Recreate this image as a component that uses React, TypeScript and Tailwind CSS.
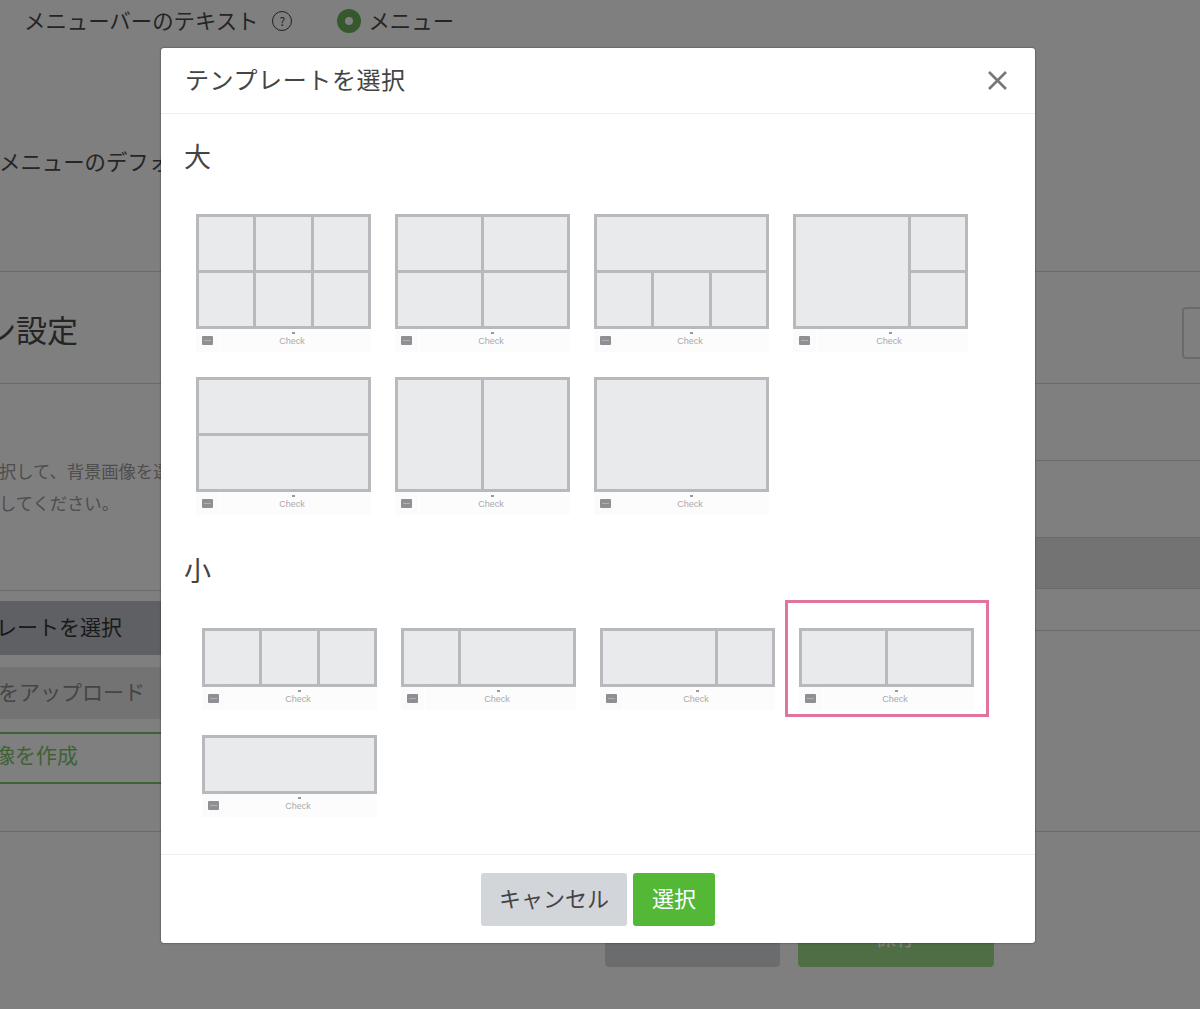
type Cell = string;

const jp = "font-['Noto_Sans_CJK_JP','Noto_Sans',sans-serif]";

// each template is a 6 column grid, cells say how they span
const large: Cell[][] = [
  ['col-span-2', 'col-span-2', 'col-span-2', 'col-span-2', 'col-span-2', 'col-span-2'],
  ['col-span-3', 'col-span-3', 'col-span-3', 'col-span-3'],
  ['col-span-6', 'col-span-2', 'col-span-2', 'col-span-2'],
  ['col-span-4 row-span-2', 'col-span-2', 'col-span-2'],
  ['col-span-6', 'col-span-6'],
  ['col-span-3 row-span-2', 'col-span-3 row-span-2'],
  ['col-span-6 row-span-2'],
];

const small: Cell[][] = [
  ['col-span-2 row-span-2', 'col-span-2 row-span-2', 'col-span-2 row-span-2'],
  ['col-span-2 row-span-2', 'col-span-4 row-span-2'],
  ['col-span-4 row-span-2', 'col-span-2 row-span-2'],
  ['col-span-3 row-span-2', 'col-span-3 row-span-2'],
  ['col-span-6 row-span-2'],
];

function Thumb({ cells, tall }: { cells: Cell[]; tall: boolean }) {
  return (
    <div className="w-[175px]">
      <div className={`grid grid-cols-6 grid-rows-2 gap-[3px] border-[3px] border-[#b8b9bd] bg-[#b8b9bd] ${tall ? 'h-[115px]' : 'h-[59px]'}`}>
        {cells.map((c, i) => (
          <div key={i} className={`bg-[#e9eaec] ${c}`} />
        ))}
      </div>
      <div className="flex h-[23px]">
        <div className="flex w-[23px] items-center justify-center bg-[#fbfbfb]">
          <div className="flex h-[9px] w-[11px] flex-col justify-center rounded-[1px] bg-[#8e8f93] px-[2px]">
            <div className="h-px bg-[#b0b1b5]" />
          </div>
        </div>
        <div className="relative ml-px flex-1 bg-[#fcfcfc] pr-[7px] text-center font-['Liberation_Sans',sans-serif] text-[9px] leading-[25px] text-[#a9a9ab]">
          Check
          <div className="absolute left-[72px] top-[3px] h-[2px] w-[3px] bg-[#9a9a9c]" />
        </div>
      </div>
    </div>
  );
}

function Page() {
  return (
    <div className={`h-[1009px] w-[1200px] overflow-hidden bg-white text-[#4a4a4a] ${jp}`}>
      <div className="flex h-[42px] items-center pl-[24px] text-[21.4px]">
        <span className="pb-[2px]">メニューバーのテキスト</span>
        <span className="ml-[14px] flex h-[20px] w-[20px] items-center justify-center rounded-full border-[1.5px] border-[#444] text-[12px]">?</span>
        <span className="ml-[45px] h-[24px] w-[24px] rounded-full border-[8px] border-[#6cb058] bg-white" />
        <span className="ml-[7px] pb-[2px]">メニュー</span>
      </div>
      <div className="ml-[-1px] mt-[103px] text-[21.4px] leading-[32px] whitespace-nowrap">メニューのデフォルト表示</div>
      <div className="mt-[94px] border-b border-[#d4d4d4]" />
      <div className="flex h-[112px] items-center justify-between border-b border-[#d4d4d4]">
        <h1 className="ml-[-15px] pt-[4px] text-[31px] font-normal">ン設定</h1>
        <div className="mr-[-40px] mt-[11px] h-[52px] w-[58px] rounded border-2 border-[#d4d4d4]" />
      </div>
      <div className="flex">
        <div className="w-[600px]">
          <p className="ml-[-1px] mt-[71px] text-[17.3px] leading-[32px] text-[#9c9c9c] whitespace-nowrap">
            択して、背景画像を選択し<br />してください。
          </p>
          <div className="mt-[71px] border-b border-[#d4d4d4]" />
          <div className="ml-[-20px] mt-[10px] flex h-[54px] w-[420px] items-center rounded bg-[#bec1c8] pb-[2px] pl-[16px] text-[21px] text-[#333]">
            <span>レートを選択</span>
          </div>
          <div className="ml-[-20px] mt-[12px] flex h-[52px] w-[420px] items-center rounded bg-[#e6e6e6] pb-[3px] pl-[18px] text-[21px] text-[#8a8a8a]">
            <span>をアップロード</span>
          </div>
          <div className="ml-[-20px] mt-[13px] flex h-[52px] w-[420px] items-center rounded border-2 border-[#7fc46a] pb-[6px] pl-[12px] text-[21px] text-[#7fc46a]">
            <span>像を作成</span>
          </div>
          <div className="h-[47px]" />
        </div>
        <div className="flex-1">
          <div className="mt-[76px] border-b border-[#d4d4d4]" />
          <div className="mt-[76px] h-[52px] border-y border-[#d4d4d4] bg-[#e6e6e6]" />
          <div className="mt-[41px] border-b border-[#d4d4d4]" />
        </div>
      </div>
      <div className="border-b border-[#d4d4d4]" />
      <div className="mt-[75px] flex justify-end pr-[206px]">
        <div className="mr-[18px] h-[60px] w-[175px] rounded bg-[#d6d8dc]" />
        <div className="flex h-[60px] w-[196px] items-center justify-center rounded bg-[#9edd8a] text-[21px] text-white">保存</div>
      </div>
    </div>
  );
}

export default function App() {
  return (
    <div className="relative h-[1009px] w-[1200px] overflow-hidden">
      <Page />
      <div className="absolute inset-0 bg-black/50" />
      <div className={`absolute left-[161px] top-[48px] w-[874px] rounded-[3px] bg-white text-[#444] shadow-[0_0_2px_rgba(0,0,0,0.6)] ${jp}`}>
        <div className="flex h-[66px] items-center justify-between border-b border-[#eeeeee] pl-[24px] pr-[28px]">
          <h2 className="mb-[4px] text-[24px] font-normal tracking-[0.6px]">テンプレートを選択</h2>
          <svg width="19" height="19" viewBox="0 0 19 19" fill="none" stroke="#777777" strokeWidth="2.6">
            <path d="M1 1 18 18M18 1 1 18" />
          </svg>
        </div>
        <div className="h-[740px] pl-[27px]">
          <h3 className="ml-[-4px] pt-[22px] text-[27px] leading-[40px] font-normal">大</h3>
          <div className="ml-[8px] mt-[38px] grid grid-cols-[repeat(4,199px)] grid-rows-[repeat(2,163px)]">
            {large.map((cells, i) => (
              <Thumb key={i} cells={cells} tall />
            ))}
          </div>
          <h3 className="ml-[-4px] mt-[10px] text-[27px] leading-[40px] font-normal">小</h3>
          <div className="ml-[14px] mt-[38px] grid grid-cols-[repeat(4,199px)] grid-rows-[repeat(2,107px)]">
            {small.map((cells, i) => (
              <div key={i} className="relative">
                {i === 3 && <div className="absolute left-[-14px] top-[-28px] h-[117px] w-[204px] border-[3px] border-[#e0749e]" />}
                <Thumb cells={cells} tall={false} />
              </div>
            ))}
          </div>
        </div>
        <div className="flex h-[89px] items-center justify-center gap-[6px] border-t border-[#eeeeee]">
          <button className="h-[53px] w-[146px] rounded-[3px] bg-[#d2d5da] pb-[3px] text-[22px] text-[#444]">キャンセル</button>
          <button className="h-[53px] w-[82px] rounded-[3px] bg-[#52b836] pb-[3px] text-[22px] text-white">選択</button>
        </div>
      </div>
    </div>
  );
}
